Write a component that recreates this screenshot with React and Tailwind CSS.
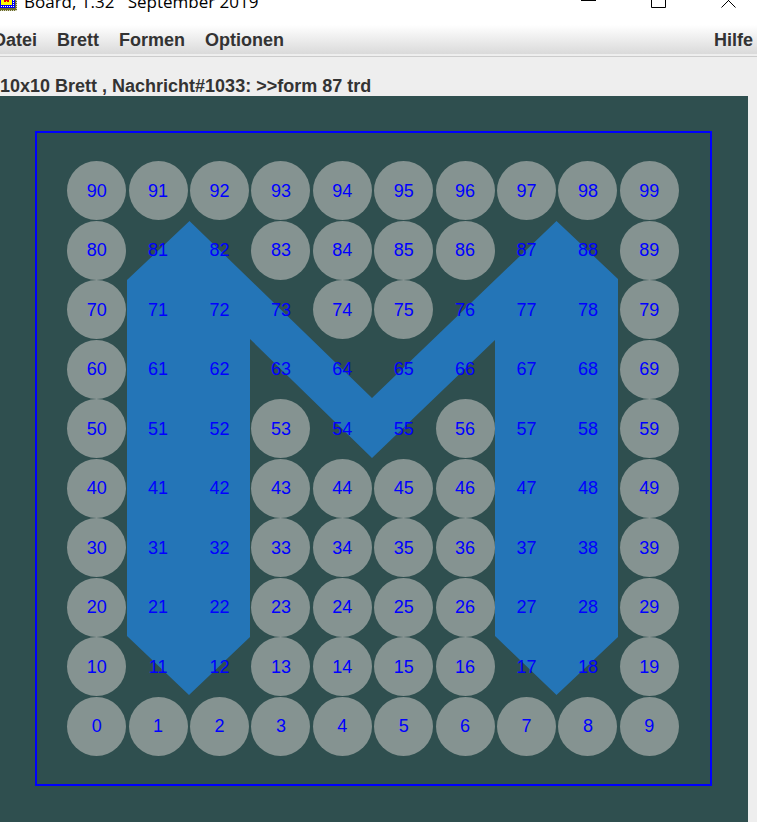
import React from "react";

const MENUS = ["Datei", "Brett", "Formen", "Optionen"];

// Fields covered by the current form; they show no disc of their own.
const COVERED = new Set([
  81, 82, 87, 88, 71, 72, 73, 76, 77, 78, 61, 62, 63, 64, 65, 66, 67, 68,
  51, 52, 54, 55, 57, 58, 41, 42, 47, 48, 31, 32, 37, 38, 21, 22, 27, 28,
  11, 12, 17, 18,
]);

const FIELDS = Array.from({ length: 100 }, (_, i) => {
  const row = 9 - Math.floor(i / 10);
  return row * 10 + (i % 10);
});

function AppIcon() {
  return (
    <svg width="24" height="24" viewBox="0 0 24 24" shapeRendering="crispEdges" aria-hidden="true" className="shrink-0">
      <rect x="3" y="1" width="21" height="22" fill="#6b6b2a" />
      <path d="M4 22.5H24M23.5 2V23" fill="none" stroke="#d8d8c0" strokeWidth="1" strokeDasharray="1 1" />
      <rect x="5" y="3" width="17" height="17" fill="#0000f0" />
      <path d="M6 18.5H22M20.5 4V20M6.5 4V20" fill="none" stroke="#ffffff" strokeWidth="1" strokeDasharray="1 1" />
      <rect x="8" y="6" width="11" height="11" fill="#ffff00" />
      <path d="M11 8h2v3h1V8h2v6h-2v-1h-1v1h-2z" fill="#e00000" />
    </svg>
  );
}

function WindowButton({ label, path }) {
  return (
    <button type="button" aria-label={label} className="flex h-full w-[70px] items-center justify-center">
      <svg width="15" height="15" viewBox="0 0 15 15" fill="none" stroke="#000" strokeWidth="1" aria-hidden="true">
        <path d={path} />
      </svg>
    </button>
  );
}

function TitleBar() {
  return (
    <header className="-mt-[25px] flex h-[50px] items-center bg-white">
      <div className="-ml-[7px] flex flex-1 items-center gap-[7px]">
        <AppIcon />
        <h1 className="whitespace-pre pt-1 font-['Open_Sans','Noto_Sans',sans-serif] text-[17px] leading-6 text-black">
          {"Board, 1.32   September 2019"}
        </h1>
      </div>
      <div className="-mr-[6px] flex h-full">
        <WindowButton label="Minimieren" path="M0 7.5H15" />
        <WindowButton label="Maximieren" path="M0.5 0.5H14.5V14.5H0.5Z" />
        <WindowButton label="Schließen" path="M0.5 0.5L14.5 14.5M14.5 0.5L0.5 14.5" />
      </div>
    </header>
  );
}

function MenuBar() {
  return (
    <nav className="border-b border-[#cccccc] bg-[#eeeeee] pb-[2px]">
      <div className="flex h-[29px] items-center justify-between bg-linear-to-b from-white to-[#dadada] pr-1">
        <div className="-ml-[7px] flex gap-5">
          {MENUS.map((name) => (
            <button key={name} type="button">{name}</button>
          ))}
        </div>
        <button type="button">Hilfe</button>
      </div>
    </nav>
  );
}

function Board() {
  return (
    <main className="mr-[9px] bg-[#2f4f4f] p-[35px] pr-9 pb-9">
      <div className="border-2 border-[#0000ff] py-7 pr-[30px] pl-[29px]">
        <div className="relative grid aspect-[614/595] w-full grid-cols-10 grid-rows-10">
          <svg
            className="absolute inset-0 h-full w-full"
            viewBox="66 161 614 595"
            preserveAspectRatio="none"
            aria-hidden="true"
          >
            <polygon
              fill="#2475b7"
              points="127,280 189.5,221 372,398 556.5,221 618,279 618,637 556.5,695 495,636 495,340 372,458 250,339 250,637 189,695 127,636"
            />
          </svg>
          {FIELDS.map((n) => (
            <div key={n} className="relative flex items-center justify-center">
              <div
                className={
                  COVERED.has(n)
                    ? "flex aspect-square w-[96%] items-center justify-center"
                    : "flex aspect-square w-[96%] items-center justify-center rounded-full bg-[#859391]"
                }
              >
                {n}
              </div>
            </div>
          ))}
        </div>
      </div>
    </main>
  );
}

export default function App() {
  return (
    <div className="min-h-screen overflow-hidden bg-[#eeeeee] font-['Liberation_Sans',Arial,sans-serif]">
      <TitleBar />
      <div className="text-[18px] leading-5 font-bold text-[#333333]">
        <MenuBar />
        <p className="pt-[19px] whitespace-nowrap">10x10 Brett , Nachricht#1033: &gt;&gt;form 87 trd</p>
      </div>
      <div className="text-[18px] leading-5 text-[#0000ff]">
        <Board />
      </div>
    </div>
  );
}
